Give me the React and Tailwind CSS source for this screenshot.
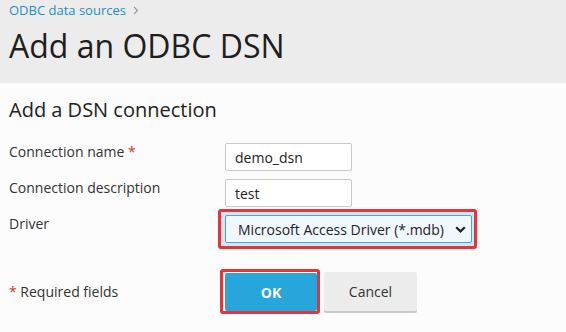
import React from 'react';

const Chevron = () => (
  <svg width="6" height="9" viewBox="0 0 6 9" className="ml-[7px]">
    <path d="M1 1l3.5 3.5L1 8" fill="none" stroke="#9a9a9a" strokeWidth="1.2" />
  </svg>
);

const Field = ({ label, required, children }) => (
  <div className="flex items-start">
    <div className="w-[216px] shrink-0 -mt-[1px] text-[14px] leading-[20px] text-[#333]">
      {label}
      {required && <span className="text-[#d0312d]"> *</span>}
    </div>
    {children}
  </div>
);

const TextInput = ({ value }) => (
  <div className="w-[127px] h-[28px] border border-[#c9c9c9] rounded-[2px] bg-white pl-[9px] flex items-center text-[14px] text-[#222]">
    {value}
  </div>
);

export default function App() {
  return (
    <div className="w-[566px] h-[332px] overflow-hidden bg-[#fcfcfc] font-['Open_Sans',sans-serif]">
      <header className="h-[83px] bg-[#ececec] px-[9px]">
        <div className="pt-[1px] flex items-center text-[13px] leading-[18px] text-[#1f8dc6]">
          ODBC data sources
          <Chevron />
        </div>
        <h1 className="mt-[8px] text-[32px] leading-[38px] font-medium text-[#1e1e1e]">Add an ODBC DSN</h1>
      </header>

      <main className="px-[9px]">
        <h2 className="pt-[13px] text-[20px] leading-[28px] text-[#222]">Add a DSN connection</h2>

        <div className="mt-[19px] flex flex-col gap-[8px]">
          <Field label="Connection name" required>
            <TextInput value="demo_dsn" />
          </Field>
          <Field label="Connection description">
            <TextInput value="test" />
          </Field>
          <Field label="Driver">
            <div className="relative">
              <div className="absolute -left-[7px] -right-[5px] -top-[6px] -bottom-[6px] border-[3px] border-[#e6343b] rounded-[3px] bg-[#d3e6f4]" />
              <div className="relative w-[247px] h-[28px] border border-[#4aa3dc] rounded-[2px] bg-[#f0f8ff] pl-[12px] pr-[5px] flex items-center justify-between text-[14px] text-[#222]">
                <span>Microsoft Access Driver (*.mdb)</span>
                <svg width="11" height="7" viewBox="0 0 11 7">
                  <path d="M1.2 1.2l4.3 4.2 4.3-4.2" fill="none" stroke="#222" strokeWidth="2.2" />
                </svg>
              </div>
            </div>
          </Field>
        </div>

        <div className="mt-[29px] flex items-center">
          <div className="w-[216px] shrink-0 text-[14px] leading-[20px] text-[#333]">
            <span className="text-[#d0312d]">*</span> Required fields
          </div>
          <div className="flex items-start gap-[7px]">
            <div className="relative mt-[1px]">
              <div className="absolute -left-[5px] -right-[3px] -top-[4px] -bottom-[3px] border-[3px] border-[#e6343b] rounded-[3px]" />
              <button className="relative w-[92px] h-[38px] bg-[#27a6dc] rounded-[2px] text-white text-[14px] font-bold">
                OK
              </button>
            </div>
            <button className="w-[93px] h-[39px] bg-[#ececec] rounded-[2px] shadow-[0_2px_0_#c9c9c9] text-[#333] text-[14px]">
              Cancel
            </button>
          </div>
        </div>
      </main>
    </div>
  );
}
